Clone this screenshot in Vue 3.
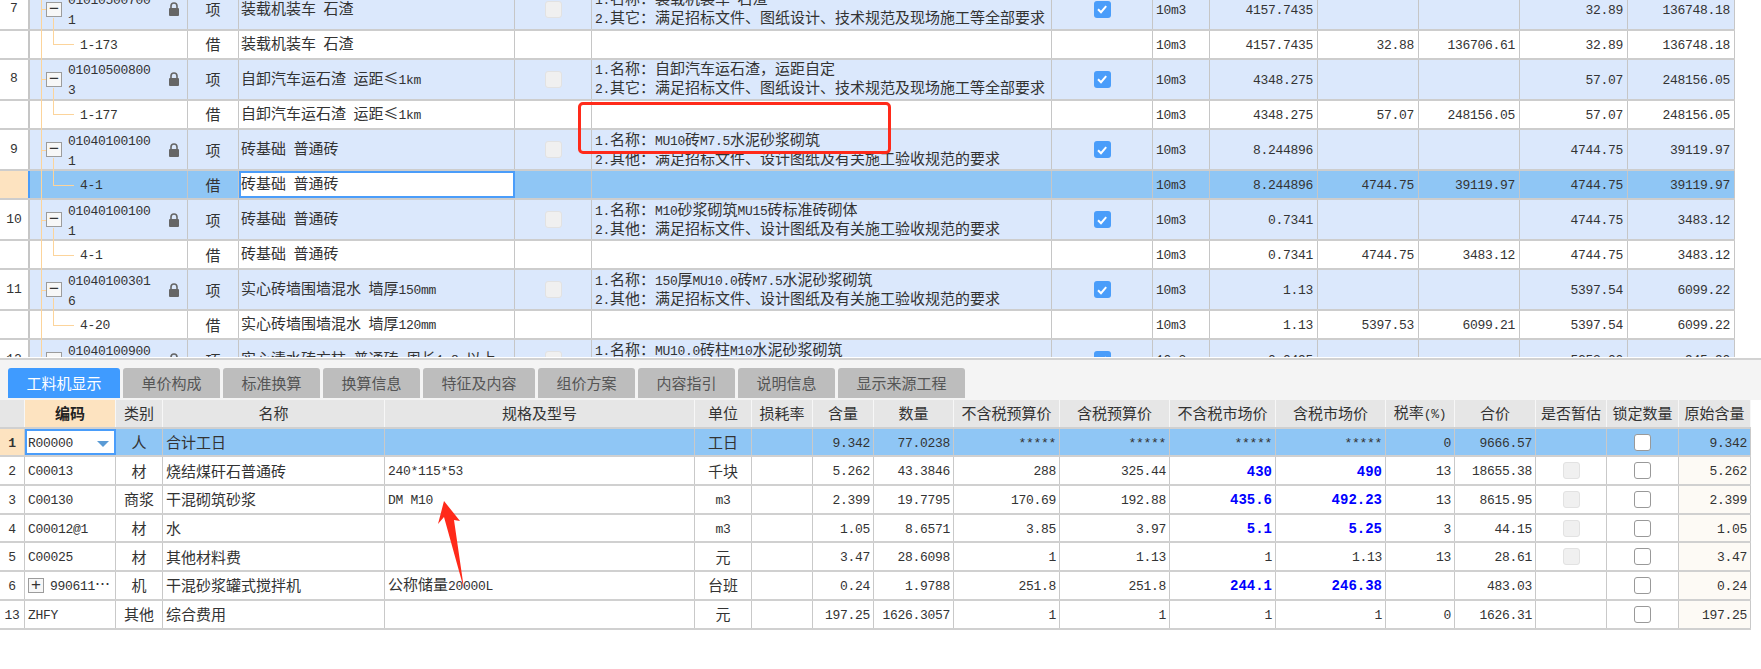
<template>
  <div class="page">
    <div class="top-pane">
      <div class="top-scroll">
        <div
          v-for="(r, i) in topRows"
          :key="i"
          class="trow"
          :class="{ parent: r.parent, sub: !r.parent, active: r.active }"
        >
          <div class="c gutter">{{ r.no }}</div>
          <div class="c tree">
            <i class="tree-v"></i>
            <template v-if="r.parent">
              <i class="tree-t"></i>
              <i class="tree-d"></i>
              <span class="fold">−</span>
              <span class="code"><Txt :text="r.code" /><br /><Txt :text="r.code2" /></span>
              <svg class="lock" viewBox="0 0 12 14" width="12" height="14">
                <path d="M3 6V4a3 3 0 0 1 6 0v2" fill="none" stroke="#666" stroke-width="1.6" />
                <rect x="1" y="6" width="10" height="8" rx="1" fill="#666" />
              </svg>
            </template>
            <template v-else>
              <i class="tree-u"></i>
              <i class="tree-h"></i>
              <span class="subcode"><Txt :text="r.code" /></span>
            </template>
          </div>
          <div class="c center cjk">{{ r.parent ? '项' : '借' }}</div>
          <div class="c name" :class="{ editing: r.active }"><Txt :text="r.name" /></div>
          <div class="c center"><span v-if="r.parent" class="box off"></span></div>
          <div class="c feat">
            <div v-for="l in r.feat" :key="l"><Txt :text="l" /></div>
          </div>
          <div class="c center">
            <span v-if="r.parent" class="box on">
              <svg viewBox="0 0 16 16" width="16" height="16">
                <path d="M4 8.2l3 3 5.2-6" fill="none" stroke="#fff" stroke-width="2" />
              </svg>
            </span>
          </div>
          <div class="c"><Txt text="10m3" /></div>
          <div class="c num"><Txt :text="r.qty" /></div>
          <div class="c num"><Txt :text="r.p1" /></div>
          <div class="c num"><Txt :text="r.t1" /></div>
          <div class="c num"><Txt :text="r.p2" /></div>
          <div class="c num"><Txt :text="r.t2" /></div>
        </div>
      </div>
    </div>

    <div class="tabs">
      <div
        v-for="(t, i) in tabs"
        :key="t.label"
        class="tab"
        :class="{ current: i === 0 }"
        :style="{ width: t.w + 'px' }"
      >{{ t.label }}</div>
    </div>

    <div class="bottom">
      <div class="brow head">
        <div
          v-for="(h, i) in heads"
          :key="i"
          class="b"
          :class="{ 'head-code': i === 1 }"
        ><Txt :text="h" /></div>
      </div>
      <div v-for="(r, i) in bottomRows" :key="i" class="brow" :class="{ active: i === 0 }">
        <div class="b center idx"><Txt :text="r[0]" /></div>
        <div class="b codecell" :class="{ editing: i === 0 }">
          <span v-if="r[1].startsWith('990611')" class="fold plus">+</span>
          <span class="codetext"><Txt :text="r[1]" /></span>
          <i v-if="i === 0" class="drop"></i>
        </div>
        <div class="b center"><Txt :text="r[2]" /></div>
        <div class="b left"><Txt :text="r[3]" /></div>
        <div class="b left"><Txt :text="r[4]" /></div>
        <div class="b center"><Txt :text="r[5]" /></div>
        <div class="b"></div>
        <div class="b num"><Txt :text="r[6]" /></div>
        <div class="b num"><Txt :text="r[7]" /></div>
        <div class="b num"><Txt :text="r[8]" /></div>
        <div class="b num"><Txt :text="r[9]" /></div>
        <div class="b num" :class="{ blue: r[14] }"><Txt :text="r[10]" /></div>
        <div class="b num" :class="{ blue: r[14] }"><Txt :text="r[11]" /></div>
        <div class="b num"><Txt :text="r[12]" /></div>
        <div class="b num"><Txt :text="r[13]" /></div>
        <div class="b center"><span v-if="i > 0 && i < 5" class="box off"></span></div>
        <div class="b center"><span class="box blank"></span></div>
        <div class="b num orig"><Txt :text="r[6]" /></div>
      </div>
    </div>

    <!-- 标注：红框和箭头 -->
    <div class="mark-box"></div>
    <svg class="mark-arrow" width="40" height="92" viewBox="0 0 40 92">
      <polygon points="10,2 26,22 20,21 30,90 10,18 4,25" fill="#ff2a1a" />
    </svg>
  </div>
</template>

<script setup>
import { h } from 'vue'

// 中文 15px，半角字符用等宽字体压到 7.5px
const Txt = (props) => {
  const parts = String(props.text ?? '').match(/[\x20-\x7e]+|[^\x20-\x7e]+/g) || []
  return h('span', parts.map((p) => h('span', { class: /^[\x20-\x7e]/.test(p) ? 'lat' : 'han' }, p)))
}
Txt.props = ['text']

// 全角冒号、逗号
const COLON = '\uFF1A'
const COMMA = '\uFF0C'
const first = (s) => `1.名称${COLON}${s}`

const other1 = `2.其它${COLON}满足招标文件、图纸设计、技术规范及现场施工等全部要求`
const other2 = `2.其他${COLON}满足招标文件、设计图纸及有关施工验收规范的要求`

const topRows = [
  { parent: true, no: '7', code: '01010500700', code2: '1', name: '装载机装车 石渣', feat: [first('装载机装车 石渣'), other1], qty: '4157.7435', p2: '32.89', t2: '136748.18' },
  { code: '1-173', name: '装载机装车 石渣', feat: [], qty: '4157.7435', p1: '32.88', t1: '136706.61', p2: '32.89', t2: '136748.18' },
  { parent: true, no: '8', code: '01010500800', code2: '3', name: '自卸汽车运石渣 运距≤1km', feat: [first(`自卸汽车运石渣${COMMA}运距自定`), other1], qty: '4348.275', p2: '57.07', t2: '248156.05' },
  { code: '1-177', name: '自卸汽车运石渣 运距≤1km', feat: [], qty: '4348.275', p1: '57.07', t1: '248156.05', p2: '57.07', t2: '248156.05' },
  { parent: true, no: '9', code: '01040100100', code2: '1', name: '砖基础 普通砖', feat: [first('MU10砖M7.5水泥砂浆砌筑'), other2], qty: '8.244896', p2: '4744.75', t2: '39119.97' },
  { active: true, code: '4-1', name: '砖基础 普通砖', feat: [], qty: '8.244896', p1: '4744.75', t1: '39119.97', p2: '4744.75', t2: '39119.97' },
  { parent: true, no: '10', code: '01040100100', code2: '1', name: '砖基础 普通砖', feat: [first('M10砂浆砌筑MU15砖标准砖砌体'), other2], qty: '0.7341', p2: '4744.75', t2: '3483.12' },
  { code: '4-1', name: '砖基础 普通砖', feat: [], qty: '0.7341', p1: '4744.75', t1: '3483.12', p2: '4744.75', t2: '3483.12' },
  { parent: true, no: '11', code: '01040100301', code2: '6', name: '实心砖墙围墙混水 墙厚150mm', feat: [first('150厚MU10.0砖M7.5水泥砂浆砌筑'), other2], qty: '1.13', p2: '5397.54', t2: '6099.22' },
  { code: '4-20', name: '实心砖墙围墙混水 墙厚120mm', feat: [], qty: '1.13', p1: '5397.53', t1: '6099.21', p2: '5397.54', t2: '6099.22' },
  { parent: true, no: '12', code: '01040100900', code2: '1', name: '实心清水砖方柱 普通砖 周长1.8m以上', feat: [first('MU10.0砖柱M10水泥砂浆砌筑'), other2], qty: '0.0495', p2: '5253.00', t2: '945.90' }
]

const tabs = [
  { label: '工料机显示', w: 112 },
  { label: '单价构成', w: 97 },
  { label: '标准换算', w: 97 },
  { label: '换算信息', w: 97 },
  { label: '特征及内容', w: 112 },
  { label: '组价方案', w: 97 },
  { label: '内容指引', w: 97 },
  { label: '说明信息', w: 97 },
  { label: '显示来源工程', w: 127 }
]

const heads = ['', '编码', '类别', '名称', '规格及型号', '单位', '损耗率', '含量', '数量', '不含税预算价', '含税预算价', '不含税市场价', '含税市场价', '税率(%)', '合价', '是否暂估', '锁定数量', '原始含量']

// 序号,编码,类别,名称,规格,单位,含量,数量,不含税预算,含税预算,不含税市场,含税市场,税率,合价,是否蓝字
const bottomRows = [
  ['1', 'R00000', '人', '合计工日', '', '工日', '9.342', '77.0238', '*****', '*****', '*****', '*****', '0', '9666.57', false],
  ['2', 'C00013', '材', '烧结煤矸石普通砖', '240*115*53', '千块', '5.262', '43.3846', '288', '325.44', '430', '490', '13', '18655.38', true],
  ['3', 'C00130', '商浆', '干混砌筑砂浆', 'DM M10', 'm3', '2.399', '19.7795', '170.69', '192.88', '435.6', '492.23', '13', '8615.95', true],
  ['4', 'C00012@1', '材', '水', '', 'm3', '1.05', '8.6571', '3.85', '3.97', '5.1', '5.25', '3', '44.15', true],
  ['5', 'C00025', '材', '其他材料费', '', '元', '3.47', '28.6098', '1', '1.13', '1', '1.13', '13', '28.61', false],
  ['6', '990611…', '机', '干混砂浆罐式搅拌机', '公称储量20000L', '台班', '0.24', '1.9788', '251.8', '251.8', '244.1', '246.38', '', '483.03', true],
  ['13', 'ZHFY', '其他', '综合费用', '', '元', '197.25', '1626.3057', '1', '1', '1', '1', '0', '1626.31', false]
]
</script>

<style>
html,
body {
  background: #fff;
}
</style>

<style scoped>
.page {
  position: relative;
  width: 1761px;
  height: 669px;
  overflow: hidden;
  background: #fff;
  color: #333;
  font-family: "Noto Sans CJK SC", "Liberation Sans", sans-serif;
  font-size: 15px;
}

.page :deep(.lat) {
  font-family: "Liberation Mono", monospace;
  font-size: 13px;
  letter-spacing: -0.3px;
  white-space: pre;
}

.page :deep(.han) {
  font-family: "Noto Sans CJK SC", sans-serif;
  font-size: 15px;
}

/* 上半部分清单 */
.top-pane {
  height: 357px;
  overflow: hidden;
  margin-bottom: 1px;
}

.top-scroll {
  margin-top: -10px;
}

.trow {
  display: grid;
  grid-template-columns: 30px 158px 51px 276px 77px 460px 101px 57px 108px 101px 101px 108px 107px;
  width: 1735px;
  border-bottom: 2px solid #cdcdcd;
  box-sizing: border-box;
}

.parent {
  height: 40.7px;
}

.sub {
  height: 29.4px;
}

.parent .c:not(.gutter) {
  background: #dbe8fc;
}

.active .c:not(.gutter) {
  background: #8fc6f5;
}

.active .gutter {
  background: #fde3c0;
  border-right: 2px solid #4a9dfa;
}

.c {
  display: flex;
  align-items: center;
  min-width: 0;
  padding: 0 3px;
  border-right: 1px solid #c6c6c6;
  line-height: 16px;
  white-space: nowrap;
  position: relative;
  box-sizing: border-box;
}

.gutter {
  justify-content: center;
  padding: 0;
  border-right: 2px solid #c6c6c6;
  font-family: "Liberation Mono", monospace;
  font-size: 13px;
}

.center {
  justify-content: center;
}

.num {
  justify-content: flex-end;
  padding-right: 4px;
}

.tree {
  padding: 0;
}

.tree-v,
.tree-t,
.tree-d,
.tree-u,
.tree-h {
  position: absolute;
  background: #fcd49b;
}

.tree-v {
  left: 11px;
  top: 0;
  bottom: -2px;
  width: 1px;
}

.tree-t {
  left: 11px;
  top: 50%;
  width: 5px;
  height: 1px;
}

.tree-d {
  left: 23px;
  top: 28px;
  bottom: -2px;
  width: 1px;
}

.tree-u {
  left: 23px;
  top: 0;
  height: 50%;
  width: 1px;
}

.tree-h {
  left: 23px;
  top: 50%;
  width: 21px;
  height: 1px;
}

.fold {
  position: absolute;
  left: 16px;
  width: 16px;
  height: 15px;
  line-height: 12px;
  text-align: center;
  border: 1px solid #9c9c9c;
  box-sizing: border-box;
  background: #f7f7f7;
  color: #333;
  font-size: 17px;
  font-family: "Liberation Sans", sans-serif;
}

.code {
  position: absolute;
  left: 38px;
  top: 50%;
  transform: translateY(-50%);
  line-height: 17px;
}

.subcode {
  position: absolute;
  left: 50px;
}

.lock {
  position: absolute;
  left: 138px;
}

.cjk {
  font-size: 15px;
}

.name {
  padding-left: 2px;
}

.editing {
  background: #fff !important;
  outline: 2px solid #4a9dfa;
  outline-offset: -2px;
  z-index: 1;
}

.feat {
  flex-direction: column;
  justify-content: center;
  align-items: flex-start;
  padding-left: 3px;
}

.box {
  display: inline-block;
  width: 17px;
  height: 17px;
  border-radius: 3px;
  box-sizing: border-box;
}

.box.off {
  background: #f0f0f0;
  border: 1px solid #e2e2e2;
}

.box.on {
  background: #4a9dfa;
  display: flex;
  align-items: center;
  justify-content: center;
}

.box.blank {
  background: #fff;
  border: 1px solid #999;
}

/* 页签 */
.tabs {
  display: flex;
  gap: 3px;
  height: 42px;
  padding: 8px 0 0 8px;
  box-sizing: border-box;
  background: #f4f4f4;
  border-top: 2px solid #d2d2d2;
}

.tab {
  height: 30px;
  line-height: 30px;
  text-align: center;
  background: #bdbdbd;
  color: #555;
  border-radius: 3px 3px 0 0;
}

.tab.current {
  background: #3f9bff;
  color: #fff;
}

/* 下半部分工料机 */
.brow {
  display: grid;
  grid-template-columns: 25px 91px 47px 222px 310px 57px 61px 61px 80px 106px 110px 106px 110px 69px 81px 71px 72px 72px;
  width: 1751px;
  height: 28.7px;
  border-bottom: 2px solid #d0d0d0;
  box-sizing: border-box;
}

.b {
  display: flex;
  align-items: center;
  min-width: 0;
  padding: 0 3px;
  border-right: 1px solid #c9c9c9;
  line-height: 16px;
  white-space: nowrap;
  box-sizing: border-box;
  position: relative;
}

.head .b {
  justify-content: center;
  background: #e6e6e6;
  border-right-color: #f7f7f7;
}

.head .head-code {
  background: #fde3c0;
  font-weight: bold;
  color: #222;
}

.active .b {
  background: #8fc6f5;
}

.active .idx {
  background: #fde3c0;
  font-weight: bold;
}

.left {
  padding-left: 3px;
}

.orig {
  background: #fdfaf5;
}

.blue {
  color: #0000ff;
  font-weight: bold;
}

.blue :deep(.lat) {
  font-size: 14px;
  letter-spacing: 0;
}

.codecell .fold.plus {
  position: static;
  flex: none;
  margin-right: 6px;
}

.codetext {
  white-space: nowrap;
}

.drop {
  position: absolute;
  right: 6px;
  top: 12px;
  width: 0;
  height: 0;
  border-left: 6px solid transparent;
  border-right: 6px solid transparent;
  border-top: 6px solid #5b9bd5;
}

/* 标注 */
.mark-box {
  position: absolute;
  left: 578px;
  top: 102px;
  width: 313px;
  height: 52px;
  border: 3px solid #ff2a1a;
  border-radius: 5px;
  box-sizing: border-box;
}

.mark-arrow {
  position: absolute;
  left: 434px;
  top: 499px;
}
</style>
